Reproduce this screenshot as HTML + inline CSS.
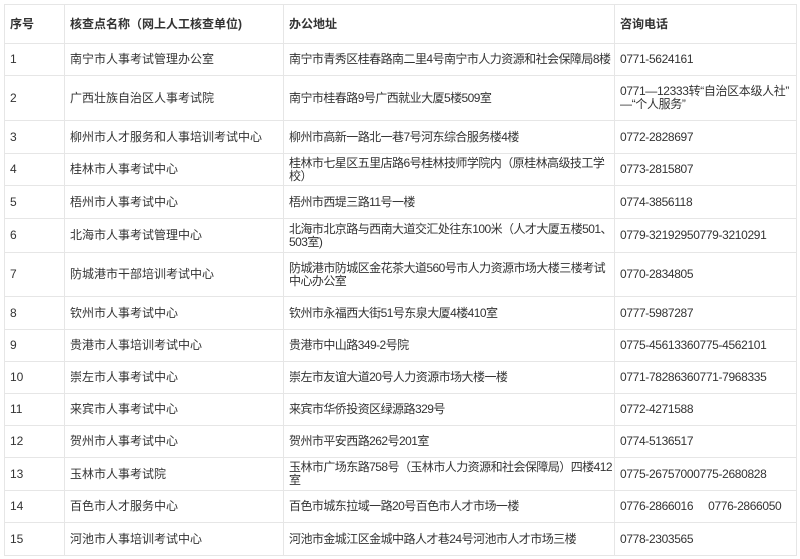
<!DOCTYPE html>
<html><head><meta charset="utf-8"><style>
body{margin:0;background:#fff;}
table{position:absolute;left:4px;top:4px;width:792px;border-collapse:collapse;table-layout:fixed;font-family:"Liberation Sans","Noto Sans CJK SC",sans-serif;font-size:12px;color:#333;}
td{border:1px solid #e6e6e6;padding:0 0 0 5px;vertical-align:middle;line-height:13px;white-space:nowrap;overflow:hidden;}
td:nth-child(3){letter-spacing:-0.55px;}
td:nth-child(4){letter-spacing:-0.35px;}
tr.h td{font-weight:bold;letter-spacing:0;}
</style></head><body>
<table>
<colgroup><col style="width:60px"><col style="width:219px"><col style="width:331px"><col style="width:182px"></colgroup>
<tr class="h" style="height:39px"><td>序号</td><td>核查点名称（网上人工核查单位)</td><td>办公地址</td><td>咨询电话</td></tr>
<tr style="height:32px"><td>1</td><td>南宁市人事考试管理办公室</td><td>南宁市青秀区桂春路南二里4号南宁市人力资源和社会保障局8楼</td><td>0771-5624161</td></tr>
<tr style="height:45px"><td>2</td><td>广西壮族自治区人事考试院</td><td>南宁市桂春路9号广西就业大厦5楼509室</td><td>0771—12333转“自治区本级人社”<br>—“个人服务”</td></tr>
<tr style="height:33px"><td>3</td><td>柳州市人才服务和人事培训考试中心</td><td>柳州市高新一路北一巷7号河东综合服务楼4楼</td><td>0772-2828697</td></tr>
<tr style="height:32px"><td>4</td><td>桂林市人事考试中心</td><td>桂林市七星区五里店路6号桂林技师学院内（原桂林高级技工学<br>校）</td><td>0773-2815807</td></tr>
<tr style="height:33px"><td>5</td><td>梧州市人事考试中心</td><td>梧州市西堤三路11号一楼</td><td>0774-3856118</td></tr>
<tr style="height:34px"><td>6</td><td>北海市人事考试管理中心</td><td>北海市北京路与西南大道交汇处往东100米（人才大厦五楼501、<br>503室)</td><td>0779-32192950779-3210291</td></tr>
<tr style="height:44px"><td>7</td><td>防城港市干部培训考试中心</td><td>防城港市防城区金花茶大道560号市人力资源市场大楼三楼考试<br>中心办公室</td><td>0770-2834805</td></tr>
<tr style="height:33px"><td>8</td><td>钦州市人事考试中心</td><td>钦州市永福西大街51号东泉大厦4楼410室</td><td>0777-5987287</td></tr>
<tr style="height:32px"><td>9</td><td>贵港市人事培训考试中心</td><td>贵港市中山路349-2号院</td><td>0775-45613360775-4562101</td></tr>
<tr style="height:32px"><td>10</td><td>崇左市人事考试中心</td><td>崇左市友谊大道20号人力资源市场大楼一楼</td><td>0771-78286360771-7968335</td></tr>
<tr style="height:32px"><td>11</td><td>来宾市人事考试中心</td><td>来宾市华侨投资区绿源路329号</td><td>0772-4271588</td></tr>
<tr style="height:32px"><td>12</td><td>贺州市人事考试中心</td><td>贺州市平安西路262号201室</td><td>0774-5136517</td></tr>
<tr style="height:33px"><td>13</td><td>玉林市人事考试院</td><td>玉林市广场东路758号（玉林市人力资源和社会保障局）四楼412<br>室</td><td>0775-26757000775-2680828</td></tr>
<tr style="height:32px"><td>14</td><td>百色市人才服务中心</td><td>百色市城东拉域一路20号百色市人才市场一楼</td><td>0776-2866016&nbsp;&nbsp;&nbsp;&nbsp;&nbsp;0776-2866050</td></tr>
<tr style="height:33px"><td>15</td><td>河池市人事培训考试中心</td><td>河池市金城江区金城中路人才巷24号河池市人才市场三楼</td><td>0778-2303565</td></tr>
</table>
</body></html>
